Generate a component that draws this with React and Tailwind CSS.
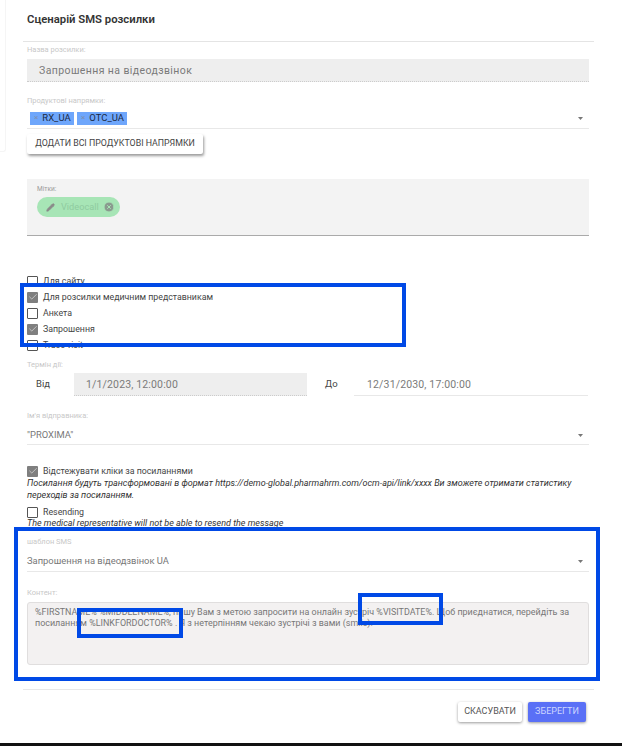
import React from "react";
import { Pencil, XCircle, Check } from "lucide-react";

function Label({ children, className = "" }) {
  return <div className={`text-[7.5px] leading-[10px] text-[#c8c8c8] ${className}`}>{children}</div>;
}

function Arrow() {
  return (
    <svg width="5" height="3" viewBox="0 0 5 3" className="shrink-0">
      <path d="M0 0h5L2.5 3z" fill="#777" />
    </svg>
  );
}

function Box({ checked, label }) {
  return (
    <div className="flex items-center gap-[5px] h-[12px]">
      {checked ? (
        <span className="w-[11px] h-[11px] bg-[#7f7f7f] flex items-center justify-center shrink-0 rounded-[1px]">
          <Check size={10} color="#e8e8e8" strokeWidth={1.5} />
        </span>
      ) : (
        <span className="w-[11px] h-[11px] border border-[#555] bg-white shrink-0 rounded-[1px]" />
      )}
      <span className="text-[8.8px] leading-[12px] text-[#444]">{label}</span>
    </div>
  );
}

function Select({ children, className = "" }) {
  return (
    <div className={`flex items-center justify-between border-b border-[#e8e8e8] pr-[6px] pt-[1px] ${className}`}>
      <span className="text-[9.4px] text-[#777]">{children}</span>
      <Arrow />
    </div>
  );
}

export default function App() {
  return (
    <div className="relative w-[622px] h-[746px] bg-white overflow-hidden font-['Roboto',sans-serif]">
      {/* Sliver of the page behind the dialog */}
      <div className="absolute left-0 top-0 w-[6px] h-[152px] border-r border-b border-[#f5f5f5] rounded-br-[3px]" />

      <div className="relative h-[743px] pl-[27px] pr-[33px]">
        {/* Header */}
        <header className="h-[42px] -ml-[4px] -mr-[5px] pl-[4px] border-b border-[#e4e4e4] flex items-start pt-[13px]">
          <h1 className="text-[11.3px] leading-[14px] font-semibold text-[#333]">Сценарій SMS розсилки</h1>
        </header>

        {/* Name */}
        <Label className="mt-[3px]">Назва розсилки:</Label>
        <div className="mt-[4px] h-[23px] bg-[#eeeeee] border-b border-dotted border-[#ccc] flex items-center pl-[12px] pt-[1px] text-[10.5px] tracking-[0.4px] text-[#7a7a7a]">
          Запрошення на відеодзвінок
        </div>

        {/* Directions */}
        <Label className="mt-[14px]">Продуктові напрямки:</Label>
        <div className="mt-[2px] h-[21px] border-b border-[#e8e8e8] flex items-center justify-between pl-[3px] pr-[6px]">
          <div className="flex gap-[3px]">
            <span className="w-[44px] h-[13px] bg-[#6ea6fb] pl-[4px] flex items-center gap-[4px] text-[9.5px] text-[#1c2a44]">
              <span className="text-[#7d8fb0] text-[8px]">×</span>
              RX_UA
            </span>
            <span className="w-[50px] h-[13px] bg-[#6ea6fb] pl-[4px] flex items-center gap-[4px] text-[9.5px] text-[#1c2a44]">
              <span className="text-[#7d8fb0] text-[8px]">×</span>
              OTC_UA
            </span>
          </div>
          <Arrow />
        </div>
        <button className="mt-[5px] h-[20px] w-[176px] bg-white rounded-[2px] shadow-[1px_2px_3px_rgba(0,0,0,0.4)] text-[8.8px] text-[#444] whitespace-nowrap">
          ДОДАТИ ВСІ ПРОДУКТОВІ НАПРЯМКИ
        </button>

        {/* Tags */}
        <div className="mt-[25px] h-[57px] bg-[#f3f3f3] border-b border-[#aaa] pl-[10px] pt-[6px]">
          <div className="text-[6.5px] leading-[8px] text-[#999]">Мітки:</div>
          <div className="mt-[4px] w-[83px] h-[20px] rounded-full bg-[#a7e5b6] flex items-center pl-[9px] gap-[6px]">
            <Pencil size={9} color="#8a8a8a" fill="#8a8a8a" />
            <span className="text-[9.2px] w-[36px] text-[#8fcba0]">Videocall</span>
            <XCircle size={12} color="#a7e5b6" fill="#8a9a8f" />
          </div>
        </div>

        {/* Checkboxes */}
        <div className="mt-[39px] flex flex-col gap-[4px]">
          <Box label="Для сайту" />
          <Box checked label="Для розсилки медичним представникам" />
          <Box label="Анкета" />
          <Box checked label="Запрошення" />
          <Box label="Trace visit" />
        </div>

        {/* Dates */}
        <Label className="mt-[9px]">Термін дії:</Label>
        <div className="mt-[3px] h-[23px] flex items-stretch">
          <span className="w-[47px] pl-[9px] flex items-center text-[9.5px] text-[#444]">Від</span>
          <div className="w-[233px] bg-[#eeeeee] border-b border-dotted border-[#ccc] flex items-center pl-[12px] pt-[1px] text-[10.5px] tracking-[0.15px] text-[#7a7a7a]">
            1/1/2023, 12:00:00
          </div>
          <span className="w-[47px] pl-[18px] flex items-center text-[9.5px] text-[#444]">До</span>
          <div className="w-[234px] border-b border-[#e8e8e8] flex items-center pl-[13px] pt-[1px] text-[10.5px] tracking-[0.15px] text-[#7a7a7a]">
            12/31/2030, 17:00:00
          </div>
        </div>

        {/* Sender */}
        <Label className="mt-[15px]">Ім'я відправника:</Label>
        <Select className="mt-[4px] h-[20px]">"PROXIMA"</Select>

        {/* Tracking */}
        <div className="mt-[20px]">
          <Box checked label="Відстежувати кліки за посиланнями" />
          <p className="text-[9px] leading-[12px] italic text-[#333] w-[555px]">
            Посилання будуть трансформовані в формат https://demo-global.pharmahrm.com/ocm-api/link/xxxx Ви зможете отримати статистику переходів за посиланням.
          </p>
        </div>
        <div className="mt-[5px]">
          <Box label="Resending" />
          <p className="text-[9px] leading-[11px] italic text-[#333]">The medical representative will not be able to resend the message</p>
        </div>

        {/* Template */}
        <Label className="mt-[8px]">шаблон SMS</Label>
        <Select className="mt-[4px] h-[21px]">Запрошення на відеодзвінок UA</Select>

        <Label className="mt-[16px]">Контент:</Label>
        <div className="mt-[4px] h-[63px] bg-[#f3f1f1] border border-[#e0dede] rounded-[3px] pl-[7px] pr-[10px] pt-[4px] text-[8.95px] leading-[10.5px] text-[#777]">
          %FIRSTNAME% %MIDDLENAME%, пишу Вам з метою запросити на онлайн зустріч %VISITDATE%. Щоб приєднатися, перейдіть за посиланням %LINKFORDOCTOR% . Я з нетерпінням чекаю зустрічі з вами (smile).
        </div>

        {/* Footer */}
        <footer className="mt-[24px] -ml-[4px] -mr-[5px] border-t border-[#e8e8e8] pt-[12px] pr-[8px] flex justify-end gap-[6px]">
          <button className="w-[64px] h-[20px] bg-white rounded-[2px] shadow-[0_1px_3px_rgba(0,0,0,0.4)] text-[9px] text-[#555]">СКАСУВАТИ</button>
          <button className="w-[58px] h-[20px] bg-[#5a70f6] rounded-[2px] shadow-[0_1px_3px_rgba(0,0,0,0.4)] text-[9px] text-[#cdd6ff]">ЗБЕРЕГТИ</button>
        </footer>
      </div>

      {/* Bottom strip */}
      <div className="absolute left-0 right-0 bottom-0 h-[3px] bg-[#111]" />

      {/* Annotations */}
      <div className="absolute left-[20px] top-[283px] w-[386px] h-[64px] border-[4px] border-[#0049e6]" />
      <div className="absolute left-[14px] top-[527px] w-[586px] h-[154px] border-[4px] border-[#0049e6]" />
      <div className="absolute left-[77px] top-[608px] w-[106px] h-[30px] border-[4px] border-[#0049e6]" />
      <div className="absolute left-[358px] top-[593px] w-[85px] h-[32px] border-[4px] border-[#0049e6]" />
    </div>
  );
}
